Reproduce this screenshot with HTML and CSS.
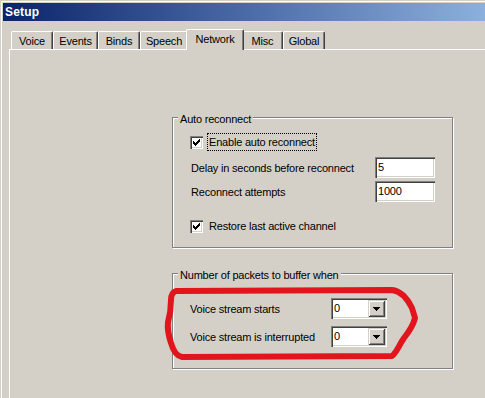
FILE: index.html
```html
<!DOCTYPE html>
<html>
<head>
<meta charset="utf-8">
<title>Setup</title>
<link rel="stylesheet" href="styles.css">
</head>
<body>
<div class="window">
  <div class="titlebar">Setup</div>
  <div class="tabs">
    <div class="tab tab-voice">Voice</div>
    <div class="tab tab-events">Events</div>
    <div class="tab tab-binds">Binds</div>
    <div class="tab tab-speech">Speech</div>
    <div class="tab tab-network selected">Network</div>
    <div class="tab tab-misc">Misc</div>
    <div class="tab tab-global">Global</div>
  </div>
  <div class="panel">
    <div class="group group-auto">
      <div class="legend">Auto reconnect</div>
      <div class="check-row">
        <span class="checkbox"><svg width="13" height="13" viewBox="0 0 13 13" shape-rendering="crispEdges"><path d="M9 3h1v1h-1z M8 4h2v1h-2z M3 5h1v1h-1z M7 5h3v1h-3z M3 6h2v1h-2z M6 6h3v1h-3z M3 7h5v1h-5z M4 8h3v1h-3z M5 9h1v1h-1z" fill="#000"/></svg></span>
        <span class="check-label focused">Enable auto reconnect</span>
      </div>
      <div class="field-row row-delay">
        <span class="field-label">Delay in seconds before reconnect</span>
        <div class="edit">5</div>
      </div>
      <div class="field-row row-attempts">
        <span class="field-label">Reconnect attempts</span>
        <div class="edit">1000</div>
      </div>
      <div class="check-row row-restore">
        <span class="checkbox"><svg width="13" height="13" viewBox="0 0 13 13" shape-rendering="crispEdges"><path d="M9 3h1v1h-1z M8 4h2v1h-2z M3 5h1v1h-1z M7 5h3v1h-3z M3 6h2v1h-2z M6 6h3v1h-3z M3 7h5v1h-5z M4 8h3v1h-3z M5 9h1v1h-1z" fill="#000"/></svg></span>
        <span class="check-label">Restore last active channel</span>
      </div>
    </div>
    <div class="group group-buffer">
      <div class="legend">Number of packets to buffer when</div>
      <div class="combo-row">
        <span class="combo-label">Voice stream starts</span>
        <div class="combo"><span class="combo-value">0</span><span class="combo-btn"><svg width="7" height="4" viewBox="0 0 7 4" shape-rendering="crispEdges"><path d="M0 0h7v1h-7z M1 1h5v1h-5z M2 2h3v1h-3z M3 3h1v1h-1z" fill="#000"/></svg></span></div>
      </div>
      <div class="combo-row row-interrupted">
        <span class="combo-label">Voice stream is interrupted</span>
        <div class="combo"><span class="combo-value">0</span><span class="combo-btn"><svg width="7" height="4" viewBox="0 0 7 4" shape-rendering="crispEdges"><path d="M0 0h7v1h-7z M1 1h5v1h-5z M2 2h3v1h-3z M3 3h1v1h-1z" fill="#000"/></svg></span></div>
      </div>
    </div>
  </div>
</div>
<svg class="scribble" width="485" height="398" viewBox="0 0 485 398">
  <path d="M176 291 L392 290 C402 291 408 300 412 308 L415 318 C413 326 408 333 404 338 C399 345 397 352 392 356 L182 357 C176 356 173 350 171 343 C169 337 167 330 168 322 C170 315 171 308 171 300 C171 295 173 292 176 291 Z" fill="none" stroke="#e3151c" stroke-width="6" stroke-linejoin="round"/>
</svg>
</body>
</html>
```
FILE: styles.css
```css
html, body {
  margin: 0;
  padding: 0;
}
body {
  position: relative;
  width: 485px;
  height: 398px;
  overflow: hidden;
  background: #d4d0c8;
  font-family: "Liberation Sans", Arial, sans-serif;
  font-size: 11px;
  letter-spacing: -0.2px;
  color: #000;
}
.window {
  box-sizing: border-box;
  height: 397px;
  margin: 1px 0 0 1px;
  border-top: 1px solid #fff;
  border-left: 1px solid #fff;
  padding: 1px 0 0 1px;
}
.titlebar {
  height: 18px;
  line-height: 19px;
  padding-left: 2px;
  background: linear-gradient(to right, #0a246a 0%, #4a6aa6 50%, #8cb0dc 100%);
  color: #fff;
  font-weight: bold;
  font-size: 12px;
  letter-spacing: 0.2px;
}
.tabs {
  position: relative;
  z-index: 1;
  display: flex;
  align-items: flex-end;
  height: 20px;
  margin: 8px 0 0 8px;
}
.tab {
  box-sizing: border-box;
  height: 18px;
  padding-top: 1px;
  line-height: 16px;
  text-align: center;
  border-top: 1px solid #fff;
  border-left: 1px solid #fff;
  border-right: 1px solid #404040;
  border-radius: 2px 2px 0 0;
  box-shadow: inset -1px 0 0 #808080;
  background: #d4d0c8;
  white-space: nowrap;
}
.tab-voice { width: 42px; }
.tab-events { width: 45px; }
.tab-binds { width: 42px; }
.tab-speech { width: 48px; }
.tab-network { width: 58px; }
.tab-misc { width: 41px; }
.tab-global { width: 42px; }
.tab.selected {
  position: relative;
  z-index: 2;
  height: 21px;
  margin: 0 -2px -1px -2px;
}
.panel {
  box-sizing: border-box;
  height: 349px;
  margin-left: 6px;
  border-top: 1px solid #fff;
  border-left: 1px solid #fff;
}
.group {
  position: relative;
  box-sizing: border-box;
  width: 281px;
  margin-left: 162px;
  border: 1px solid #808080;
  box-shadow: 1px 1px 0 #fff, inset 1px 1px 0 #fff;
  padding-left: 17px;
}
.group-auto {
  margin-top: 67px;
  height: 131px;
  padding-top: 15px;
}
.group-buffer {
  margin-top: 25px;
  height: 96px;
  padding-top: 24px;
}
.legend {
  position: absolute;
  top: -5px;
  left: 5px;
  padding: 0 2px;
  line-height: 13px;
  background: #d4d0c8;
  white-space: nowrap;
}
.check-row {
  display: flex;
  align-items: center;
  height: 18px;
}
.row-restore {
  margin-top: 15px;
}
.checkbox {
  display: block;
  width: 13px;
  height: 13px;
  background: #fff;
  box-shadow: inset 1px 1px 0 #808080, inset 2px 2px 0 #404040, inset -1px -1px 0 #fff, inset -2px -2px 0 #d4d0c8;
}
.checkbox svg {
  display: block;
}
.check-label {
  box-sizing: border-box;
  height: 18px;
  margin-left: 4px;
  padding: 0 1px;
  line-height: 16px;
  border: 1px solid transparent;
  white-space: nowrap;
}
.check-label.focused {
  border: 1px dotted #000;
}
.field-row {
  display: flex;
  align-items: flex-start;
  height: 21px;
}
.row-delay {
  margin-top: 6px;
}
.row-attempts {
  margin-top: 3px;
}
.field-label {
  box-sizing: border-box;
  width: 185px;
  padding: 5px 0 0 1px;
  line-height: 13px;
  white-space: nowrap;
}
.edit {
  box-sizing: border-box;
  width: 60px;
  height: 21px;
  padding-left: 3px;
  line-height: 20px;
  background: #fff;
  box-shadow: inset 1px 1px 0 #808080, inset 2px 2px 0 #404040, inset -1px -1px 0 #fff, inset -2px -2px 0 #d4d0c8;
}
.combo-row {
  display: flex;
  align-items: flex-start;
  height: 21px;
}
.row-interrupted {
  margin-top: 7px;
}
.combo-label {
  box-sizing: border-box;
  width: 141px;
  padding-top: 5px;
  line-height: 13px;
  white-space: nowrap;
}
.combo {
  box-sizing: border-box;
  display: flex;
  align-items: center;
  width: 56px;
  height: 21px;
  padding: 2px;
  background: #fff;
  box-shadow: inset 1px 1px 0 #808080, inset 2px 2px 0 #404040, inset -1px -1px 0 #fff, inset -2px -2px 0 #d4d0c8;
}
.combo-value {
  flex: 1;
  padding-left: 1px;
  line-height: 17px;
}
.combo-btn {
  display: flex;
  align-items: center;
  justify-content: center;
  width: 17px;
  height: 17px;
  background: #d4d0c8;
  box-shadow: inset 1px 1px 0 #d4d0c8, inset -1px -1px 0 #404040, inset 2px 2px 0 #fff, inset -2px -2px 0 #808080;
}
.combo-btn svg {
  display: block;
}
.scribble {
  position: absolute;
  left: 0;
  top: 0;
  pointer-events: none;
}
```
